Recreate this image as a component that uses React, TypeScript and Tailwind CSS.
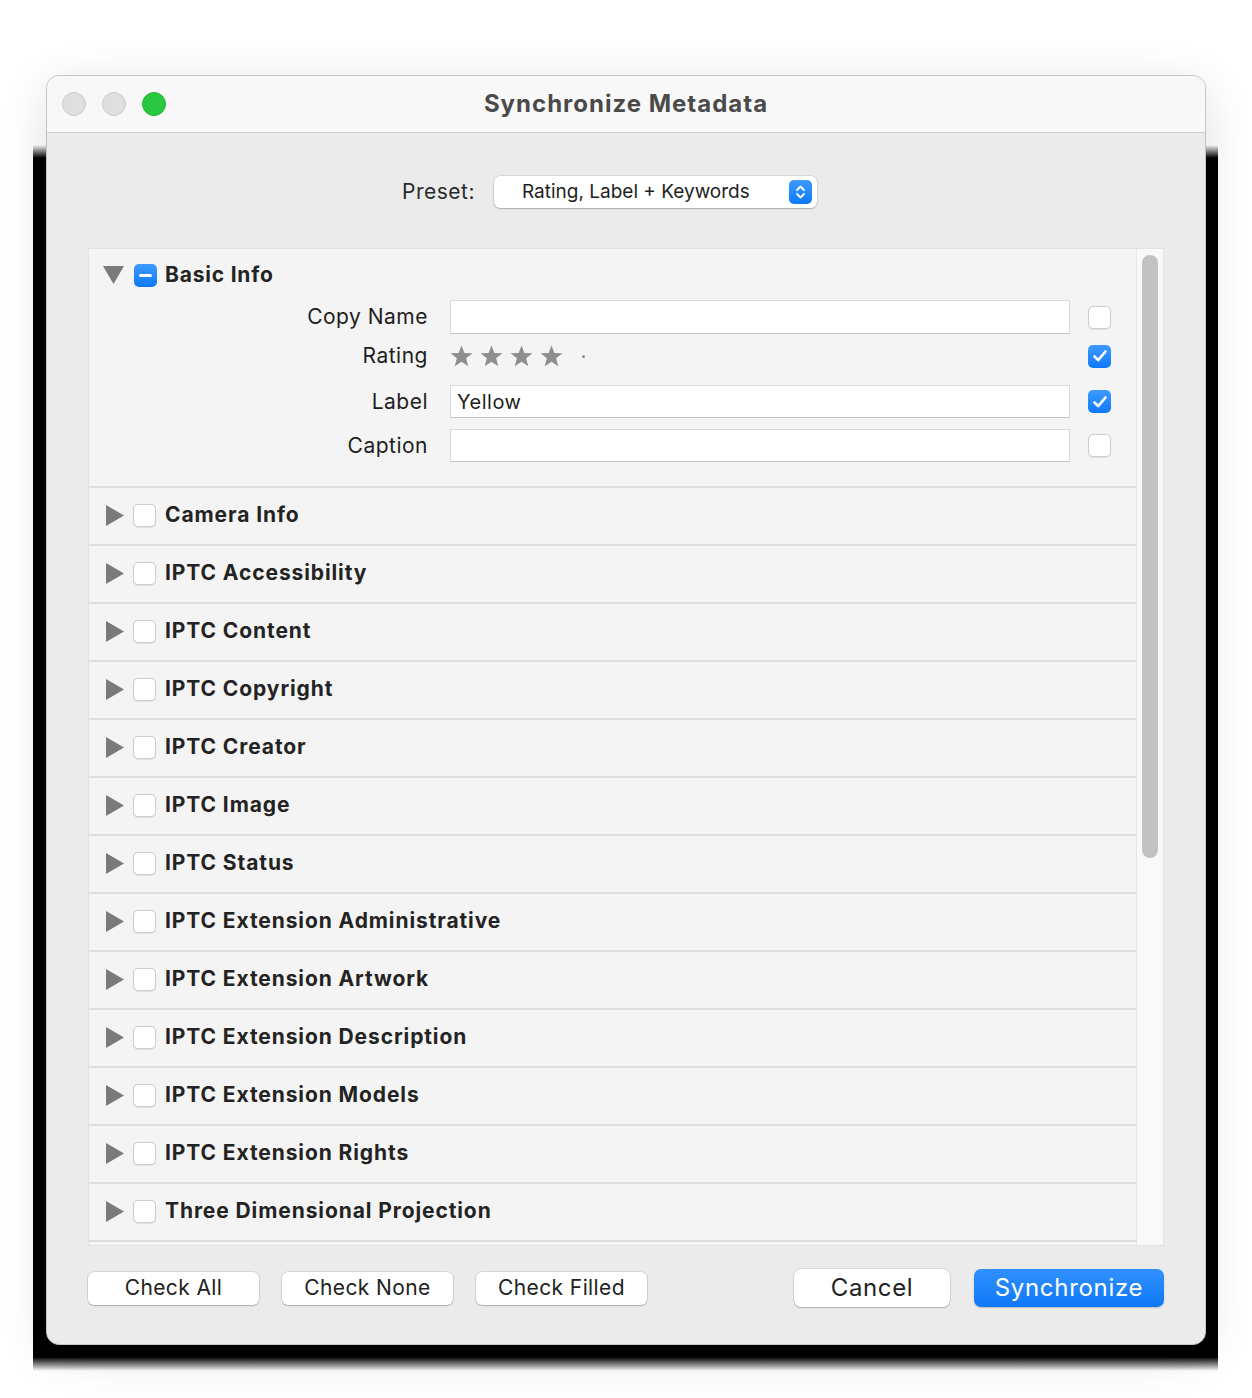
import React from "react";

const sections = [
  "Camera Info",
  "IPTC Accessibility",
  "IPTC Content",
  "IPTC Copyright",
  "IPTC Creator",
  "IPTC Image",
  "IPTC Status",
  "IPTC Extension Administrative",
  "IPTC Extension Artwork",
  "IPTC Extension Description",
  "IPTC Extension Models",
  "IPTC Extension Rights",
  "Three Dimensional Projection",
];

function Checkbox({ state = "off" }: { state?: "off" | "on" | "mixed" }) {
  if (state === "off") {
    return (
      <div className="h-[23px] w-[23px] shrink-0 rounded-[5px] border border-[#cdcdcd] bg-white shadow-[0_0.5px_1px_rgba(0,0,0,0.08)]" />
    );
  }
  return (
    <div className="flex h-[23px] w-[23px] shrink-0 items-center justify-center rounded-[5px] bg-linear-to-b from-[#3c9bff] to-[#0a78fa]">
      {state === "on" ? (
        <svg width="16" height="14" viewBox="0 0 16 14" fill="none">
          <path d="M2.5 7.5 L6.2 11.2 L13.5 2.5" stroke="white" strokeWidth="2.6" strokeLinecap="round" strokeLinejoin="round" />
        </svg>
      ) : (
        <div className="h-[3px] w-[13px] rounded-full bg-white" />
      )}
    </div>
  );
}

function Disclosure({ open = false }: { open?: boolean }) {
  return open ? (
    <svg width="21" height="18" viewBox="0 0 21 18" className="shrink-0">
      <polygon points="0,0 21,0 10.5,18" fill="#7a7a7a" />
    </svg>
  ) : (
    <svg width="18" height="21" viewBox="0 0 18 21" className="shrink-0">
      <polygon points="0,0 18,10.5 0,21" fill="#7a7a7a" />
    </svg>
  );
}

function Star() {
  return (
    <svg width="23" height="23" viewBox="0 0 24 24" className="shrink-0">
      <path
        d="M12 0.6 L15 8.3 L23.4 8.6 L16.8 13.8 L19.1 22.2 L12 17.4 L4.9 22.2 L7.2 13.8 L0.6 8.6 L9 8.3 Z"
        fill="#8e8e8e"
      />
    </svg>
  );
}

function Field({ value = "" }: { value?: string }) {
  return (
    <div className="flex h-full w-[620px] items-center border border-[#dadada] border-b-[#c4c4c4] bg-white px-[6px] text-[20px] tracking-[0.5px] text-[#1e1e1e]">
      {value}
    </div>
  );
}

function MetaRow({
  label,
  checked,
  className,
  children,
}: {
  label: string;
  checked: boolean;
  className: string;
  children: React.ReactNode;
}) {
  return (
    <div className={`flex items-center ${className}`}>
      <div className="w-[339px] shrink-0 text-right text-[21px] tracking-[0.5px] text-[#1e1e1e]">{label}</div>
      <div className="ml-[22px] flex h-full w-[620px] items-center">{children}</div>
      <div className="ml-[18px]">
        <Checkbox state={checked ? "on" : "off"} />
      </div>
    </div>
  );
}

function PlainButton({ label }: { label: string }) {
  return (
    <button
      type="button"
      className="flex h-[33px] w-[171px] items-center justify-center rounded-[6px] bg-white text-[21px] tracking-[0.4px] text-[#222] shadow-[0_0_0_0.5px_rgba(0,0,0,0.16),0_1px_1.5px_rgba(0,0,0,0.2)]"
    >
      {label}
    </button>
  );
}

export default function App() {
  return (
    <div
      className="relative h-[1398px] w-[1252px] overflow-hidden bg-white pl-[46px] pt-[75px]"
      style={{ fontFamily: "Inter, 'Noto Sans', sans-serif" }}
    >
      {/* odd black backdrop captured behind the window */}
      <div className="absolute left-[33px] top-[145px] h-[1226px] w-[1185px] bg-[linear-gradient(to_bottom,rgba(0,0,0,0)_0px,#000_13px,#000_1212px,rgba(0,0,0,0)_1226px)]" />

      <div className="relative z-10 flex h-[1270px] w-[1160px] flex-col overflow-hidden rounded-[13px] border border-[#c4c4c4] bg-[#ebebeb] shadow-[0_10px_50px_rgba(0,0,0,0.12)]">
        {/* title bar */}
        <div className="relative flex h-[57px] shrink-0 items-center border-b border-[#cfcfcf] bg-[#f8f8f8] pl-[15px]">
          <div className="flex gap-[16px]">
            <div className="h-[24px] w-[24px] rounded-full border border-[#cbcbcb] bg-[#dfdfdf]" />
            <div className="h-[24px] w-[24px] rounded-full border border-[#cbcbcb] bg-[#dfdfdf]" />
            <div className="h-[24px] w-[24px] rounded-full border border-[#20b23a] bg-[#28c840]" />
          </div>
          <div className="absolute inset-x-0 top-0 flex h-full items-center justify-center text-[24px] font-bold tracking-[1px] text-[#4a4a4a]">
            Synchronize Metadata
          </div>
        </div>

        {/* preset */}
        <div className="mt-[43px] flex items-center pl-[355px]">
          <span className="text-[21px] tracking-[0.5px] text-[#2a2a2a]">Preset:</span>
          <div className="ml-[19px] flex h-[32px] w-[323px] items-center rounded-[6px] bg-white pl-[28px] pr-[5px] shadow-[0_0_0_0.5px_rgba(0,0,0,0.15),0_1px_1.5px_rgba(0,0,0,0.2)]">
            <span className="flex-1 text-[19px] text-[#1e1e1e]">Rating, Label + Keywords</span>
            <div className="flex h-[24px] w-[23px] items-center justify-center rounded-[5px] bg-linear-to-b from-[#3c9bff] to-[#0a78fa]">
              <svg width="11" height="16" viewBox="0 0 11 16" fill="none">
                <path d="M2 6 L5.5 2.5 L9 6" stroke="white" strokeWidth="1.8" strokeLinecap="round" strokeLinejoin="round" />
                <path d="M2 10 L5.5 13.5 L9 10" stroke="white" strokeWidth="1.8" strokeLinecap="round" strokeLinejoin="round" />
              </svg>
            </div>
          </div>
        </div>

        {/* list */}
        <div className="ml-[41px] mt-[40px] flex h-[998px] w-[1076px] overflow-hidden border border-[#e2e2e2] bg-[#f4f4f4]">
          <div className="w-[1047px] shrink-0">
            {/* Basic Info */}
            <div className="h-[237px]">
              <div className="flex h-[51px] items-center pl-[14px] pt-[1px]">
                <Disclosure open />
                <div className="ml-[10px]">
                  <Checkbox state="mixed" />
                </div>
                <span className="ml-[8px] text-[21px] font-bold tracking-[0.8px] text-[#232323]">Basic Info</span>
              </div>
              <MetaRow label="Copy Name" checked={false} className="h-[34px]">
                <Field />
              </MetaRow>
              <MetaRow label="Rating" checked className="mt-[4px] h-[36px]">
                <div className="flex items-center gap-[7px]">
                  <Star />
                  <Star />
                  <Star />
                  <Star />
                  <div className="ml-[12px] h-[3px] w-[3px] rounded-full bg-[#8f8f8f]" />
                </div>
              </MetaRow>
              <MetaRow label="Label" checked className="mt-[11px] h-[33px]">
                <Field value="Yellow" />
              </MetaRow>
              <MetaRow label="Caption" checked={false} className="mt-[11px] h-[33px]">
                <Field />
              </MetaRow>
            </div>

            {sections.map((name) => (
              <div key={name} className="flex h-[58px] items-center border-t-2 border-[#dedede] pb-[2px] pl-[17px]">
                <Disclosure />
                <div className="ml-[9px]">
                  <Checkbox />
                </div>
                <span className="ml-[9px] text-[21px] font-bold tracking-[0.9px] text-[#232323]">{name}</span>
              </div>
            ))}
            <div className="border-t-2 border-[#dedede]" />
          </div>

          {/* scroll track */}
          <div className="flex-1 border-l border-[#e6e6e6] bg-[#f9f9f9] pl-[5px] pt-[6px]">
            <div className="h-[603px] w-[16px] rounded-full bg-[#c2c2c2]" />
          </div>
        </div>

        {/* buttons */}
        <div className="ml-[41px] mt-[23px] flex w-[1076px] items-center">
          <div className="flex gap-[23px]">
            <PlainButton label="Check All" />
            <PlainButton label="Check None" />
            <PlainButton label="Check Filled" />
          </div>
          <div className="ml-auto flex gap-[24px]">
            <button
              type="button"
              className="flex h-[38px] w-[156px] items-center justify-center rounded-[7px] bg-white text-[24px] tracking-[0.6px] text-[#222] shadow-[0_0_0_0.5px_rgba(0,0,0,0.16),0_1px_1.5px_rgba(0,0,0,0.2)]"
            >
              Cancel
            </button>
            <button
              type="button"
              className="flex h-[38px] w-[190px] items-center justify-center rounded-[7px] bg-linear-to-b from-[#2f90ff] to-[#0d78f6] text-[24px] tracking-[0.7px] text-white shadow-[0_1px_1.5px_rgba(0,0,0,0.2)]"
            >
              Synchronize
            </button>
          </div>
        </div>
      </div>
    </div>
  );
}
